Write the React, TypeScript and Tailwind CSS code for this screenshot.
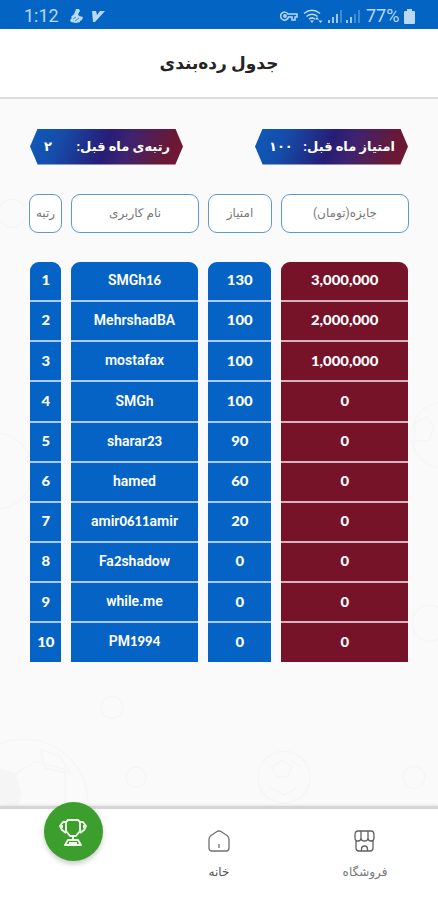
import React from "react";

const players = [
  { name: "SMGh16", score: "130", prize: "3,000,000" },
  { name: "MehrshadBA", score: "100", prize: "2,000,000" },
  { name: "mostafax", score: "100", prize: "1,000,000" },
  { name: "SMGh", score: "100", prize: "0" },
  { name: "sharar23", score: "90", prize: "0" },
  { name: "hamed", score: "60", prize: "0" },
  { name: "amir0611amir", score: "20", prize: "0" },
  { name: "Fa2shadow", score: "0", prize: "0" },
  { name: "while.me", score: "0", prize: "0" },
  { name: "PM1994", score: "0", prize: "0" },
];

function StatusBar() {
  return (
    <header className="flex h-[29px] shrink-0 items-center bg-[#0464c4] pl-6 pr-[23px] pt-[3px] text-[#b9d9f6]">
      <span className="w-[46px] text-[18px] leading-none">1:12</span>
      <svg className="h-[14px] w-[13px]" viewBox="0 0 13 14" fill="currentColor">
        <path d="M6 0h3l1 2-2 3 1 2 4 1-1 3-2 1v1l-4 1-5-1-1-2 2-2-1-1 2-2 1-1 1-2z" />
        <path d="M3 10l3-2m-1 4l4-3" stroke="#0464c4" strokeWidth=".7" />
      </svg>
      <svg className="ml-[9px] h-[13px] w-[13px]" viewBox="0 0 13 13" fill="currentColor">
        <path d="M0 1h4l1 4 3-4h5L3 12H1z" />
      </svg>
      <span className="grow" />
      <svg className="h-[10px] w-[18px]" viewBox="0 0 18 10" fill="none" stroke="currentColor" strokeWidth="1.5">
        <path d="M8 3h9v3h-2v3h-3V6H8.5A4 4 0 1 1 8 3z" />
        <circle cx="5" cy="5" r="1.2" />
      </svg>
      <svg className="ml-[5px] h-[15px] w-[20px]" viewBox="0 0 20 15" fill="none" stroke="currentColor" strokeWidth="1.6">
        <path d="M1 4.5Q9 -2 17 4.5M3.5 7.5Q9 3 14.5 7.5M6 10.2Q9 7.5 12 10.2" />
        <path d="M7 11.5h4L9 14zM12 10.5l2-2.5 2 2.5zM15.500 11.500l2 2.500 2-2.500z" fill="currentColor" stroke="none" />
      </svg>
      <svg className="ml-[4px] h-[14px] w-[34px]" viewBox="0 0 34 14" stroke="currentColor" strokeWidth="1.7">
        <path d="M2 14v-3M6 14V8M10 14V5M20 14v-3M24 14V8" />
        <path d="M14 14V1M28 14V5M32 14V1" opacity=".4" />
      </svg>
      <span className="ml-[5px] w-[35px] text-[18px] leading-none">77%</span>
      <svg className="ml-[3px] h-[15px] w-[11px]" viewBox="0 0 11 15" fill="currentColor">
        <path d="M3 0h5v2h2q1 0 1 1v11q0 1-1 1H1q-1 0-1-1V3q0-1 1-1h2z" />
      </svg>
    </header>
  );
}

function Badge({ label, value }: { label: string; value: string }) {
  return (
    <div className="flex h-9 w-[153px] items-center justify-between bg-[linear-gradient(110deg,#0d5bbb_0%,#154da9_20%,#261d76_49%,#3d2370_62%,#671937_86%,#751631_100%)] pl-[14px] pr-[13px] text-[13px] font-bold text-white [clip-path:polygon(5%_0,95%_0,100%_50%,95%_100%,5%_100%,0_50%)]">
      <span>{label}</span>
      <span>{value}</span>
    </div>
  );
}

/* Digits use a rounder face than the Latin letters. */
function Mixed({ text }: { text: string }) {
  const numeric = /^[\d,]+$/.test(text);
  return (
    <span className={numeric ? "mt-[2px] inline-block scale-x-[1.1] font-['Lato'] text-[13.5px] font-black" : ""}>
      {numeric
        ? text
        : text.split(/(\d+)/).map((part, i) => (
            <span key={i} className={/\d/.test(part) ? "font-['Lato'] text-[13px] font-black" : ""}>
              {part}
            </span>
          ))}
    </span>
  );
}

function Column({ items, className }: { items: string[]; className: string }) {
  return (
    <div dir="ltr" className={"grid h-[399.5px] grid-rows-10 gap-[2px] overflow-hidden rounded-t-[9px] " + className}>
      {items.map((item, i) => (
        <div key={i} className="flex items-center justify-center pb-[2px] text-[14px] leading-none font-semibold text-white">
          <Mixed text={item} />
        </div>
      ))}
    </div>
  );
}

const blue = "bg-[#abcaef] *:bg-[#0563c5]";

function Pitch() {
  return (
    <svg className="pointer-events-none absolute inset-0 h-full w-full" viewBox="0 0 438 707" fill="none" stroke="#f6f6f6" strokeWidth="1.500">
      <circle cx="24" cy="704" r="64" />
      <path d="M0 670l16 4 5 22-8 18H0z" fill="#f5f5f5" />
      <path d="M16 674l20-12 29 8v42M40 650l20 7 10 17-25-5z" />
      <circle cx="284" cy="678" r="26" />
      <path d="M272 668l10-7 10 6-4 10-11 1zM291 661l9 6M270 688l14 8 12-7" />
      <circle cx="112" cy="608" r="11" />
      <circle cx="136" cy="678" r="10" />
      <circle cx="414" cy="678" r="11" />
      <circle cx="444" cy="336" r="33" />
      <path d="M415 323l12-5 7 10-5 13-14 1z" />
      <circle cx="-5" cy="372" r="38" />
      <circle cx="430" cy="524" r="18" />
      <circle cx="12" cy="114" r="14" />
    </svg>
  );
}

export default function App() {
  return (
    <div dir="rtl" className="flex h-[900px] w-[438px] flex-col overflow-hidden bg-[#fafafa] font-[Roboto,'DejaVu_Sans',sans-serif]">
      <div dir="ltr"><StatusBar /></div>
      <div className="flex h-[69.500px] shrink-0 items-center justify-center border-b-2 border-[#dcdcdc] bg-white pt-px text-[17px] font-bold text-[#242424]">
        <h1>جدول رده‌بندی</h1>
      </div>
      <main className="relative grow px-[29px] pt-[30px]">
        <Pitch />
        <div className="relative flex justify-between px-px">
          <Badge label="امتیاز ماه قبل:" value="۱۰۰" />
          <Badge label="رتبه‌ی ماه قبل:" value="۲" />
        </div>
        <div className="relative mt-[29px] grid grid-cols-[128px_64px_128px_33px] justify-between">
          {["جایزه(تومان)", "امتیاز", "نام کاربری", "رتبه"].map((title) => (
            <div key={title} className="flex h-[39.500px] items-center justify-center rounded-[9px] border border-[#5d9acb] bg-white pb-px text-[12px] whitespace-nowrap text-[#777]">
              {title}
            </div>
          ))}
        </div>
        <div className="relative mt-[29px] grid grid-cols-[127px_63px_127px_31px] justify-between px-px">
          <Column items={players.map((p) => p.prize)} className="bg-[#d4b3bf] *:bg-[#771329]" />
          <Column items={players.map((p) => p.score)} className={blue} />
          <Column items={players.map((p) => p.name)} className={blue} />
          <Column items={players.map((_, i) => String(i + 1))} className={blue} />
        </div>
      </main>
      <nav className="relative grid h-[94px] shrink-0 grid-cols-3 border-t-[3px] border-[#d5d5d5] bg-white shadow-[0_-1px_2px_#e5e5e5]">
        <a className="flex flex-col items-center pt-[21px] text-[12px] text-[#777]">
          <svg className="mr-[2px] h-[22px] w-[21px]" viewBox="0 0 21 22" fill="none" stroke="#606060" strokeWidth="1.300">
            <path d="M4 1h13q3 0 3 4v3q0 3-3 3t-3-3q0 3-3.500 3T7 8q0 3-3 3T1 8V5q0-4 3-4zM7 1v7M14 1v7M2 11v7q0 3 3 3h11q3 0 3-3v-7M7.500 21v-2q0-3 3-3t3 3v2" />
          </svg>
          <span className="mt-[12px] leading-4">فروشگاه</span>
        </a>
        <a className="flex flex-col items-center pt-[21px] text-[12px] text-[#505050]">
          <svg className="h-[22px] w-[22px]" viewBox="0 0 22 22" fill="none" stroke="#707070" strokeWidth="1.300">
            <path d="M9 1.500q2-1 4 0l6 4q2 1.500 2 4V18q0 3-3 3H4q-3 0-3-3V9.500q0-2.500 2-4zM11 14v4" />
          </svg>
          <span className="mt-[12px] leading-4">خانه</span>
        </a>
        <a className="-mt-[7px] flex h-[59px] w-[59px] items-center justify-center justify-self-center rounded-full bg-[#3b9e2d] shadow-[0_3px_5px_#0003]">
          <svg className="h-[28px] w-[28px]" viewBox="0 0 28 28" fill="none" stroke="#efffe9" strokeWidth="1.900" strokeLinejoin="round">
            <path d="M9 2h10l2 2v9l-4 5h-6l-4-5V4zM7 4H4L1 8l2 4 4 3M21 4h3l3 4-2 4-4 3M3 7v3M25 7v3M14 18v4M9 22h10l3 5H6zM10 25h8" />
          </svg>
        </a>
      </nav>
    </div>
  );
}
